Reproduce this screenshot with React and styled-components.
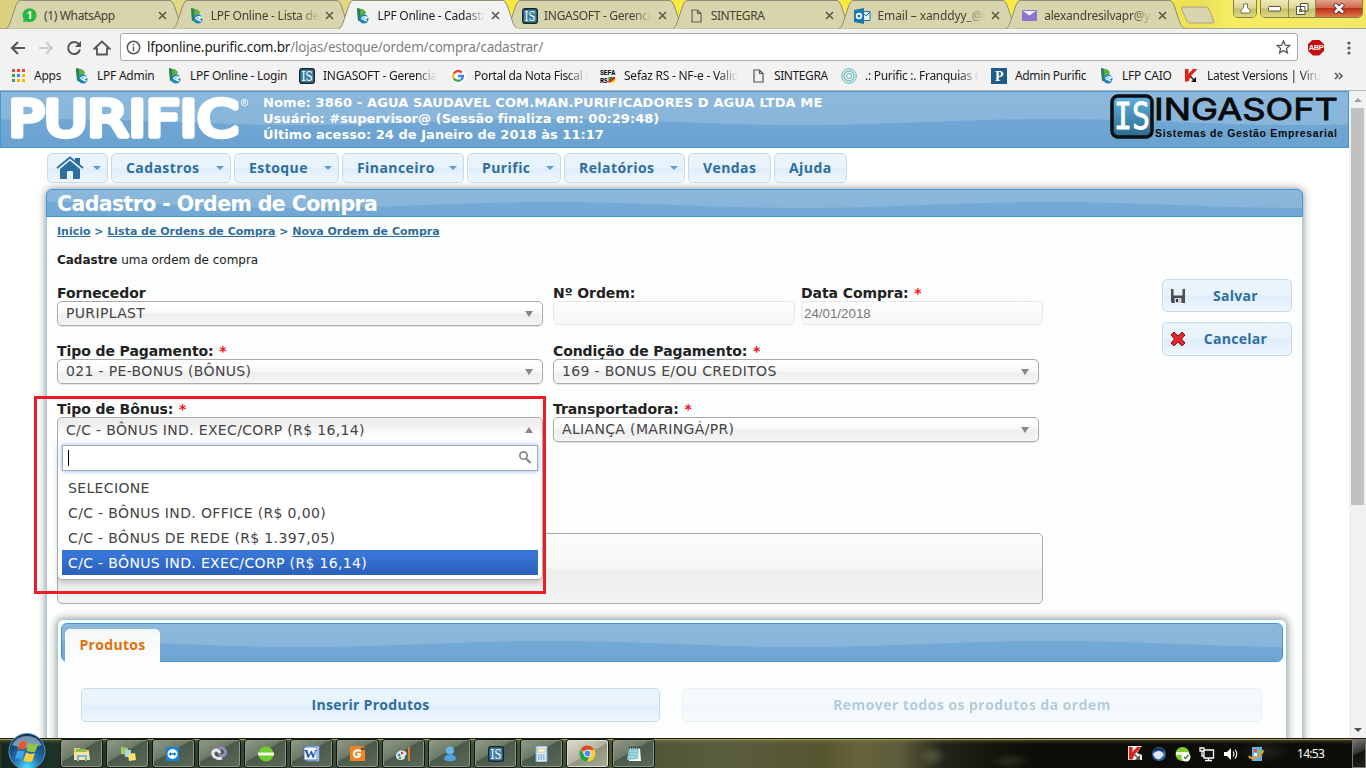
import React from "react";
import styled, { createGlobalStyle, css } from "styled-components";

const GlobalStyle = createGlobalStyle`
  *, *::before, *::after { box-sizing: border-box; }
  body { margin: 0; overflow: hidden; background: #fff; }
`;

const UI = `"Noto Sans", "Open Sans", sans-serif`;
const VERDANA = `"DejaVu Sans", sans-serif`;

const Screen = styled.div`
  width: 1366px;
  height: 768px;
  display: flex;
  flex-direction: column;
  overflow: hidden;
  font-family: ${VERDANA};
  color: #222;
`;

/* ---------- browser chrome ---------- */

const TabStrip = styled.div`
  position: relative;
  height: 29px;
  flex: none;
  display: flex;
  padding-left: 6px;
  border-bottom: 1px solid #a9a693;
  background: linear-gradient(90deg, #d9cf7e 0, #f0e678 8%, #cfc88a 20%, #f0e673 30%, #f7e93c 38%, #f8ea44 84%, #eadf58 88%, #f6ec62 90%, #f3e862 100%);
`;

const TabItem = styled.div`
  position: relative;
  width: 166.7px;
  height: 29px;
  flex: none;
  display: flex;
  align-items: center;
  padding: 2px 0 0 15px;
  z-index: ${(p) => (p.$active ? 2 : 1)};
  > svg:first-child { position: absolute; left: 0; top: 0; overflow: visible; }
`;

const TabIcon = styled.span`
  position: relative;
  width: 17px;
  height: 16px;
  display: flex;
  justify-content: center;
  align-items: center;
`;

const Fade = css`
  -webkit-mask-image: linear-gradient(90deg, #000 82%, transparent 100%);
  mask-image: linear-gradient(90deg, #000 82%, transparent 100%);
`;

const TabTitle = styled.span`
  position: relative;
  width: 108px;
  margin-left: 6px;
  overflow: hidden;
  white-space: nowrap;
  font: 12px/16px ${UI};
  letter-spacing: ${(p) => p.$ls || 0}px;
  color: ${(p) => (p.$active ? "#222" : "#45432f")};
  ${(p) => p.$fade && Fade}
`;

const CloseMark = styled.svg`
  position: relative;
  width: 9px;
  height: 9px;
  margin-left: 6px;
`;

const NewTab = styled.svg`
  position: relative;
  width: 36px;
  height: 20px;
  margin: 5px 0 0 7px;
`;

const WindowButtons = styled.div`
  position: absolute;
  top: -1px;
  right: 3px;
  display: flex;
  gap: 3px;
`;

const WinGroup = styled.div`
  display: flex;
  height: 19px;
  border: 1px solid #857f50;
  border-radius: 0 0 5px 5px;
  overflow: hidden;
  box-shadow: inset 0 0 0 1px #f5efae;
`;

const WinButton = styled.div`
  width: ${(p) => p.$w}px;
  display: flex;
  align-items: center;
  justify-content: center;
  border-left: ${(p) => (p.$sep ? "1px solid #8a855c" : "0")};
  background: ${(p) =>
    p.$close
      ? "linear-gradient(#e3a08a 0, #cf6a4e 45%, #bb2f16 50%, #dd7a4a 100%)"
      : "linear-gradient(#efe9b8 0, #dcd593 48%, #c4bc6b 52%, #e0d77d 100%)"};
`;

const Toolbar = styled.div`
  height: 37px;
  flex: none;
  display: flex;
  align-items: center;
  background: #f2f2f2;
  padding: 0 10px 0 4px;
`;

const NavIcon = styled.div`
  width: 28px;
  height: 28px;
  display: flex;
  align-items: center;
  justify-content: center;
`;

const Omnibox = styled.div`
  width: 1178px;
  height: 28px;
  margin: -1px 0 0 4px;
  padding: 0 6px 0 5px;
  display: flex;
  align-items: center;
  background: #fff;
  border: 1px solid #a9a9a9;
  border-radius: 3px;
`;

const Url = styled.span`
  flex: 1;
  margin-left: 6px;
  font: 13.5px/20px ${UI};
  letter-spacing: -0.21px;
  color: #808080;
  b { font-weight: 400; color: #222; }
`;

const Abp = styled.div`
  width: 16px;
  height: 16px;
  margin: 0 23px 0 10px;
  background: #c70d0d;
  clip-path: polygon(30% 0, 70% 0, 100% 30%, 100% 70%, 70% 100%, 30% 100%, 0 70%, 0 30%);
  color: #fff;
  font: bold 7.5px/16px "Liberation Sans", sans-serif;
  letter-spacing: -0.4px;
  text-align: center;
`;

const Bookmarks = styled.div`
  height: 25px;
  flex: none;
  display: flex;
  padding: 0 0 5px 10px;
  background: #f2f2f2;
  border-bottom: 1px solid #b6b4b6;
`;

const Bookmark = styled.div`
  width: ${(p) => p.$w}px;
  flex: none;
  display: flex;
  align-items: center;
  font: 12px/16px ${UI};
  letter-spacing: ${(p) => p.$ls || 0}px;
  color: #1c1c1c;
  white-space: nowrap;
`;

const BookmarkIcon = styled.span`
  width: 16px;
  height: 16px;
  flex: none;
  display: flex;
  align-items: center;
  justify-content: center;
  margin-right: 8px;
`;

const BookmarkText = styled.span`
  max-width: 114px;
  overflow: hidden;
  ${(p) => p.$fade && Fade}
`;

/* ---------- page ---------- */

const Viewport = styled.div`
  height: 647px;
  flex: none;
  display: flex;
  overflow: hidden;
`;

const Page = styled.div`
  width: 1349px;
  height: 647px;
  flex: none;
  overflow: hidden;
`;

const waveBar = css`
  position: relative;
  border: 1px solid #4297d7;
  background: linear-gradient(#8cb8dc, #86b3d9);
`;

const WaveSvg = styled.svg`
  position: absolute;
  inset: 0;
  width: 100%;
  height: 100%;
  border-radius: inherit;
`;

const Header = styled.header`
  ${waveBar}
  height: 57px;
  display: flex;
`;

const Brand = styled.svg`
  position: relative;
  width: 262px;
  height: 55px;
  flex: none;
`;

const SessionInfo = styled.div`
  position: relative;
  flex: 1;
  padding-top: 3px;
  font: bold 13px/16px ${VERDANA};
  color: #fff;
  white-space: nowrap;
`;

const Line = styled.div`
  letter-spacing: ${(p) => p.$ls || 0}px;
`;

const VendorLogo = styled.svg`
  position: relative;
  width: 232px;
  height: 50px;
  margin: 1px 6px 0 0;
`;

const Menu = styled.nav`
  display: flex;
  gap: 3px;
  padding: 5px 0 0 47px;
  height: 41px;
`;

const jqButton = css`
  border: 1px solid #c5dbec;
  border-radius: 5px;
  background: linear-gradient(#ebf4fd 0, #e8f3fc 48%, #deedfb 52%, #f0f7fe 100%);
  color: #2e6e9e;
  font-family: "Open Sans", ${UI};
  font-weight: 700;
`;

const MenuButton = styled.div`
  ${jqButton}
  width: ${(p) => p.$w}px;
  height: 30px;
  display: flex;
  align-items: center;
  padding: 0 6px 0 ${(p) => (p.$home ? 8 : 14)}px;
  font-size: 14px;
  letter-spacing: 0.42px;
  justify-content: space-between;
`;

const MenuText = styled.span`
  padding-bottom: 2px;
`;

const Caret = styled.i`
  border: 4px solid transparent;
  border-top-color: #5c9ccc;
  border-bottom: 0;
`;

const Panel = styled.main`
  width: 1257px;
  height: 600px;
  margin-left: 46px;
  border: 1px solid #a6c9e2;
  border-top: 0;
  border-radius: 6px 6px 0 0;
  background: #fcfdfd;
  box-shadow: 0 0 8px #888;
`;

const PanelTitle = styled.div`
  ${waveBar}
  height: 28px;
  margin: 0 -1px;
  border-radius: 6px 6px 0 0;
  padding-left: 10px;
`;

const Title = styled.h1`
  position: relative;
  margin: 0;
  font: bold 20.5px/28px ${VERDANA};
  letter-spacing: -0.6px;
  color: #fff;
`;

const Crumbs = styled.div`
  height: 21px;
  padding: 8px 0 0 10px;
  font: bold 11px/14px ${VERDANA};
  color: #2e6e9e;
  letter-spacing: -0.01px;
  white-space: nowrap;
  u { text-underline-offset: 1px; }
`;

const Intro = styled.div`
  padding: 14px 0 0 10px;
  font: 12px/16px ${VERDANA};
  letter-spacing: -0.02px;
  color: #222;
`;

const Body = styled.div`
  display: flex;
  justify-content: space-between;
  padding: 11px 10px 0;
  height: 351px;
`;

const Form = styled.div`
  position: relative;
  width: 986px;
  padding-top: 6px;
`;

const FieldRow = styled.div`
  display: grid;
  grid-template-columns: ${(p) => (p.$three ? "486px 242px 242px" : "486px 486px")};
  column-gap: ${(p) => (p.$three ? "0" : "10px")};
  ${(p) => p.$three && "> :nth-child(2) { margin: 0 0 0 10px; width: 242px; } > :nth-child(3) { margin-left: 16px; width: 242px; }"}
  height: 58px;
`;

const Label = styled.label`
  display: block;
  height: 16px;
  font: bold 14px/16px ${VERDANA};
  letter-spacing: -0.08px;
  color: #222;
  em { color: #e11; font-style: normal; margin-left: 1px; }
`;

const Select = styled.div`
  display: flex;
  align-items: center;
  justify-content: space-between;
  height: ${(p) => (p.$open ? 26 : 25)}px;
  padding: 0 9px 0 8px;
  border: 1px solid #aaa;
  border-radius: ${(p) => (p.$open ? "5px 5px 0 0" : "5px")};
  background: ${(p) =>
    p.$open
      ? "linear-gradient(#eee 20%, #fff 80%)"
      : "linear-gradient(#fff 20%, #f6f6f6 50%, #eee 52%, #f4f4f4 100%)"};
  box-shadow: ${(p) => (p.$open ? "none" : "0 1px 1px rgba(0,0,0,.1), inset 0 0 3px #fff")};
  font: 14px/${(p) => (p.$open ? 22 : 23)}px ${VERDANA};
  letter-spacing: 0.34px;
  color: #444;
`;

const Arrow = styled.i`
  border: 4px solid transparent;
  ${(p) =>
    p.$up
      ? "border-bottom: 6px solid #888; border-top: 0;"
      : "border-top: 6px solid #888; border-bottom: 0;"}
`;

const ReadOnly = styled.div`
  height: 24px;
  padding-left: 2px;
  border: 1px solid #e6e6e6;
  border-radius: 5px;
  background: linear-gradient(#fdfdfd, #f7f7f7);
  font: 13.33px/23px "Liberation Sans", sans-serif;
  color: #777;
`;

const Notes = styled.div`
  height: 71px;
  margin-top: 74px;
  border: 1px solid #aaa;
  border-radius: 5px;
  background: linear-gradient(#fcfcfc 0, #f7f7f7 49%, #eee 52%, #f2f2f2 100%);
`;

const Dropdown = styled.div`
  position: absolute;
  left: 0;
  top: 163px;
  width: 486px;
  height: 138px;
  padding: 3px 4px 0;
  border: 1px solid #aaa;
  border-top: 0;
  border-radius: 0 0 5px 5px;
  background: #fff;
  box-shadow: 0 4px 5px rgba(0, 0, 0, 0.15);
`;

const SearchBox = styled.div`
  height: 26px;
  margin-bottom: 4px;
  display: flex;
  align-items: center;
  justify-content: space-between;
  padding: 0 5px;
  border: 1px solid #aaa;
  box-shadow: 0 0 5px rgba(60, 130, 250, 0.6);
  &::before { content: ""; width: 1px; height: 16px; background: #000; }
`;

const Option = styled.div`
  height: 25px;
  padding-left: 6px;
  font: 14px/26px ${VERDANA};
  letter-spacing: 0.35px;
  color: ${(p) => (p.$on ? "#fff" : "#444")};
  background: ${(p) => (p.$on ? "linear-gradient(#3875d7 20%, #2a62bc 90%)" : "none")};
`;

const Highlight = styled.div`
  position: absolute;
  left: -23px;
  top: 117px;
  width: 512px;
  height: 198px;
  border: 3px solid #ed1c24;
`;

const Actions = styled.div`
  width: 130px;
  display: flex;
  flex-direction: column;
  gap: 10px;
`;

const ActionButton = styled.div`
  ${jqButton}
  height: 33px;
  display: flex;
  align-items: center;
  padding: 0 6px 0 7px;
  font-size: 14px;
  letter-spacing: 0.3px;
  span { flex: 1; text-align: center; padding-bottom: 1px; }
  &:last-child { height: 34px; }
`;

const Products = styled.section`
  width: 1230px;
  height: 200px;
  margin-left: 10px;
  padding: 3px;
  border: 1px solid #a6c9e2;
  border-radius: 6px;
  background: #fcfdfd;
  box-shadow: 0 0 8px #888;
`;

const TabsBar = styled.div`
  ${waveBar}
  height: 39px;
  border-radius: 6px;
  display: flex;
  align-items: flex-end;
  padding-left: 3px;
`;

const ProductTab = styled.div`
  position: relative;
  width: 95px;
  height: 33px;
  margin-bottom: -1px;
  border-radius: 5px 5px 0 0;
  background: linear-gradient(#f5f8f9, #fcfdfd);
  font: 700 14px/32px "Open Sans", ${UI};
  letter-spacing: 0.3px;
  color: #e17009;
  text-align: center;
`;

const ProductActions = styled.div`
  display: grid;
  grid-template-columns: 579px 580px;
  gap: 22px;
  padding: 26px 20px 0;
`;

const WideButton = styled.div`
  ${jqButton}
  height: 34px;
  font-size: 14px;
  line-height: 32px;
  letter-spacing: ${(p) => p.$ls}px;
  text-align: center;
  opacity: ${(p) => (p.$off ? 0.35 : 1)};
`;

const Scrollbar = styled.div`
  width: 17px;
  height: 647px;
  display: flex;
  flex-direction: column;
  align-items: center;
  justify-content: space-between;
  background: #f1f1f1;
  padding: 7px 0 6px;
`;

const Thumb = styled.div`
  width: 13px;
  height: 397px;
  margin: 6px 0 auto;
  background: #c1c1c1;
`;

const ScrollArrow = styled.i`
  border: 4px solid transparent;
  ${(p) => (p.$up ? "border-bottom-color:#a3a3a3;border-top:0;" : "border-top-color:#505050;border-bottom:0;")}
`;

/* ---------- taskbar ---------- */

const Taskbar = styled.footer`
  position: relative;
  height: 30px;
  flex: none;
  display: flex;
  align-items: flex-start;
  border-top: 1px solid #1d1c10;
  box-shadow: inset 0 1px 0 #a39a5c, inset 0 3px 3px rgba(150, 140, 80, 0.35);
  background:
    radial-gradient(14px 10px at 932px 17px, rgba(110,115,80,.55), transparent),
    radial-gradient(20px 8px at 1010px 22px, rgba(70,70,45,.5), transparent),
    radial-gradient(26px 12px at 1265px 12px, rgba(60,70,55,.4), transparent),
    linear-gradient(90deg, #14271f 0, #1d3127 4%, #35493a 18%, #3f5137 35%, #4c5234 45%, #5a5d3f 53%, #55552f 60%, #66643c 63%, #5b5b3a 66%, #25251a 69%, #14140c 73%, #0b0b07 77%, #0d0d08 100%);
`;

const Start = styled.svg`
  width: 60px;
  height: 35px;
  margin-top: -6px;
  flex: none;
`;

const TaskButtons = styled.div`
  display: flex;
  gap: 3px;
`;

const TaskButton = styled.div`
  width: 43px;
  height: 29px;
  display: flex;
  align-items: center;
  justify-content: center;
  border: 1px solid #10150f;
  border-radius: 3px;
  box-shadow: inset 0 0 0 1px ${(p) => (p.$on ? "#dfe0d2" : "#8b9583")};
  background: ${(p) =>
    p.$on
      ? "linear-gradient(150deg, #dcdccd 0, #b3b5a1 50%, #8f947d 53%, #a8ac98 100%)"
      : "linear-gradient(150deg, #939b88 0, #6e7a68 42%, #4a594b 46%, #5d6a59 100%)"};
`;

const Tray = styled.div`
  margin-left: auto;
  width: 238px;
  height: 29px;
  display: flex;
  align-items: center;
  gap: 8px;
`;

const Clock = styled.span`
  margin: 0 0 0 24px;
  width: 46px;
  font: 12px/16px ${UI};
  letter-spacing: -0.7px;
  color: #fff;
`;

const ShowDesktop = styled.div`
  width: 14px;
  height: 29px;
  margin: 0 0 0 auto;
  border: 1px solid #77776f;
  background: linear-gradient(155deg, #777 0, #33332d 45%, #10100c 50%, #22221d 100%);
`;

/* ---------- drawings ---------- */

/* Two-tone wave with a 500px period; `low` is the x of one trough. */
function Wave({ low, mid, amp = 3 }) {
  const points = [];
  for (let x = -10; x <= 1360; x += 10) {
    const y = mid + amp * Math.cos(((x - low) / 500) * 2 * Math.PI);
    points.push(`${x},${y.toFixed(2)}`);
  }
  return (
    <WaveSvg>
      <defs>
        <linearGradient id={`w${mid}`} x1="0" y1="0" x2="0" y2="60" gradientUnits="userSpaceOnUse">
          <stop offset="0" stopColor="#76acd7" />
          <stop offset="1" stopColor="#69a1d0" />
        </linearGradient>
      </defs>
      <path d={`M${points.join("L")}V80H-10Z`} fill={`url(#w${mid})`} />
    </WaveSvg>
  );
}

const LeafIcon = () => (
  <svg width="15" height="16" viewBox="0 0 15 16">
    <path d="M2 0 8.500 1.500 11 4 10 7 6 9 6 14 3 12.500Z" fill="#5bb04a" />
    <path d="M2 0 5 1 5.500 13.500 3 12.500Z" fill="#2a7f5a" />
    <circle cx="9" cy="11" r="4.500" fill="#2185bd" />
    <path d="M6.500 11Q8 7.500 12.500 9.500L8.500 11.500 12 13" fill="none" stroke="#e4f6ff" strokeWidth="1.500" />
  </svg>
);

const IsIcon = ({ s = 16 }) => (
  <svg width={s} height={s} viewBox="0 0 16 16">
    <rect x=".7" y=".7" width="14.600" height="14.600" rx="2.200" fill="#3d7f9e" stroke="#17242c" strokeWidth="1.400" />
    <text x="2.500" y="13" textLength="11" lengthAdjust="spacingAndGlyphs" fontSize="13" fontFamily="DejaVu Serif" fill="#fff">IS</text>
  </svg>
);

const DocIcon = ({ c = "#555" }) => (
  <svg width="11" height="14" viewBox="0 0 11 14" fill="none" stroke={c} strokeWidth="1.200">
    <path d="M1 1H6.500L10 4.500V13H1Z M6.500 1V4.500H10" />
  </svg>
);

const WhatsIcon = () => (
  <svg width="15" height="15" viewBox="0 0 15 15">
    <circle cx="7.500" cy="7.300" r="7" fill="#2cb742" />
    <path d="M1 14.500 2 10 5 13Z" fill="#2cb742" />
    <text x="7.500" y="11" textAnchor="middle" fontSize="10" fontWeight="700" fontFamily="Open Sans" fill="#fff">1</text>
  </svg>
);

const OutlookIcon = () => (
  <svg width="17" height="16" viewBox="0 0 17 16">
    <path d="M8 3.500H16V12.500H8Z" fill="#e8f3fa" stroke="#1877ae" />
    <path d="M8 4 12 8 16 4" fill="none" stroke="#1877ae" />
    <path d="M0 2 10 0V16L0 14Z" fill="#1877ae" />
    <circle cx="5" cy="8" r="2.400" fill="none" stroke="#fff" strokeWidth="1.600" />
  </svg>
);

const MailIcon = () => (
  <svg width="15" height="11" viewBox="0 0 15 11">
    <rect width="15" height="11" rx="1" fill="#8a76cc" />
    <path d="M1 1H14L7.500 5.500Z" fill="#f1eefc" />
  </svg>
);

const AppsIcon = () => (
  <svg width="13" height="13" viewBox="0 0 13 13">
    {["#e8453c", "#e8453c", "#e8453c", "#34a058", "#4286f5", "#f4b400", "#34a058", "#f4b400", "#f4b400"].map((c, i) => (
      <rect key={i} x={(i % 3) * 5} y={Math.floor(i / 3) * 5} width="3" height="3" fill={c} />
    ))}
  </svg>
);

const GoogleIcon = () => (
  <svg width="16" height="16" viewBox="0 0 16 16" fill="none" strokeWidth="2.300">
    <circle cx="8" cy="8" r="8" fill="#fff" />
    <path d="M11.800 4.600A5 5 0 0 0 3.700 5.700" stroke="#ea4335" />
    <path d="M3.700 5.600A5 5 0 0 0 3.700 10.400" stroke="#fbbc05" />
    <path d="M3.700 10.300A5 5 0 0 0 11.200 11.700" stroke="#34a853" />
    <path d="M8 8H13A5 5 0 0 1 11.200 11.700" stroke="#4285f4" />
  </svg>
);

const SefazIcon = () => (
  <svg width="17" height="16" viewBox="0 0 17 16">
    <text x="0" y="7" fontSize="7" fontWeight="700" textLength="16" fontFamily="Liberation Mono" fill="#000">SEFA</text>
    <text x="0" y="15" fontSize="7" fontWeight="700" textLength="8" fontFamily="Liberation Mono" fill="#000">RS</text>
    <path d="M9 9H16L9 15Z" fill="#159a3c" />
    <path d="M16 9V15H9Z" fill="#f3d51d" />
    <path d="M9 15 9 13 14 9H16V11L11 15Z" fill="#e0251b" />
  </svg>
);

const RingIcon = () => (
  <svg width="16" height="16" viewBox="0 0 16 16" fill="none" stroke="#5fb3b8">
    <circle cx="8" cy="8" r="7.300" />
    <circle cx="8" cy="8" r="5" strokeWidth="1.500" stroke="#7cc4c4" />
    <circle cx="8" cy="8" r="2.500" />
  </svg>
);

const PIcon = () => (
  <svg width="16" height="16" viewBox="0 0 16 16">
    <rect width="16" height="16" fill="#1d5c8b" />
    <text x="8" y="13" textAnchor="middle" fontSize="14" fontWeight="700" fontFamily="Liberation Serif" fill="#fff">P</text>
  </svg>
);

const KIcon = ({ tray }) => (
  <svg width="15" height="15" viewBox="0 0 15 15">
    {tray && <path d="M0 0H14L9 7 14 9V14H0Z" fill="#eee" />}
    <path d="M1 1H4.500V6L9 1H13.500L6.500 8.500 4.500 13.500H1Z" fill="#e2231a" />
    <path d="M6.500 7.500 10 11 12 9V14H7L9 12 6 9Z" fill={tray ? "#555" : "#111"} />
  </svg>
);

const WordIcon = () => (
  <svg width="17" height="17" viewBox="0 0 17 17">
    <path d="M3 1H16V16H3Z" fill="#f3f7fc" stroke="#5c88c4" />
    <path d="M1 2H14V15H1Z" fill="#f3f7fc" stroke="#2b60b0" strokeWidth=".8" />
    <text x="7.500" y="13" textAnchor="middle" fontSize="13" fontWeight="700" fontFamily="Liberation Serif" fill="#1f55a8">W</text>
  </svg>
);

const ChromeIcon = () => (
  <svg width="17" height="17" viewBox="0 0 16 16">
    <circle cx="8" cy="8" r="7.500" fill="#f9cd2f" />
    <path d="M8 8 1.500 4.200A7.500 7.500 0 0 1 14.500 4.500H8Z" fill="#dc4434" />
    <path d="M1.500 4.200A7.500 7.500 0 0 0 7.300 15.500L10 10 5 9.500Z" fill="#1c9f57" />
    <circle cx="8" cy="8" r="3.600" fill="#fff" />
    <circle cx="8" cy="8" r="2.800" fill="#4a8af4" />
  </svg>
);

const taskIcons = [
  <svg width="18" height="16" viewBox="0 0 18 16"><path d="M1 2H7L8 4H16V14H1Z" fill="#e9c964" /><path d="M3 3H13V6H3Z" fill="#8cc152" /><path d="M1 6H16L17 14H1Z" fill="#f7e6a0" /><path d="M5 15V10H13V15" fill="none" stroke="#72b5e0" strokeWidth="2" /></svg>,
  <svg width="18" height="16" viewBox="0 0 18 16"><path d="M2 1 9 2 9 9 2 8Z" fill="#9ccf6c" /><path d="M6 4 12 4 12 11 6 11Z" fill="#a9d4ee" /><path d="M9 8 16 7 17 14 10 15Z" fill="#f8e071" /></svg>,
  <svg width="15" height="16" viewBox="0 0 15 16"><path d="M0 1H13V15H0Z" fill="#1585d8" /><circle cx="6.500" cy="8" r="5" fill="#fff" /><path d="M2.500 8 5 6V7.300H8V6L10.500 8 8 10V8.700H5V10Z" fill="#1778c0" /></svg>,
  <svg width="17" height="15" viewBox="0 0 17 15" fill="none" strokeWidth="3"><path d="M8 8C11 12 16 9 14 4 12 1 9 2 8 3" stroke="#8f89c0" /><path d="M9 7C6 2 1 4 2 9 4 13 9 13 11 12" stroke="#e6e3f2" /></svg>,
  <svg width="16" height="16" viewBox="0 0 16 16"><circle cx="8" cy="8" r="7.500" fill="#6fce27" /><path d="M0 6.500H16V9.500H0Z" fill="#f4fbe9" /></svg>,
  <WordIcon />,
  <svg width="17" height="17" viewBox="0 0 17 17"><path d="M1 1H12V5H16V16H1Z" fill="#f58220" /><path d="M13 0 16 3H13Z" fill="#f58220" /><path d="M12 6C7 4 4 7 5 10S11 13 11 9H8" fill="none" stroke="#fff" strokeWidth="2" /></svg>,
  <svg width="17" height="16" viewBox="0 0 17 16"><path d="M1 10C1 5 7 3 11 6 13 9 9 9 10 12 8 15 1 15 1 10Z" fill="#dce9f2" /><circle cx="4" cy="9" r="1.300" fill="#3b78c8" /><circle cx="7" cy="7" r="1.300" fill="#d84a38" /><circle cx="5" cy="12" r="1.300" fill="#47a447" /><path d="M14 1V9M14 9V15" stroke="#d97b27" strokeWidth="2" /></svg>,
  <svg width="14" height="16" viewBox="0 0 14 16"><circle cx="7" cy="4.500" r="4" fill="#68b7ec" /><path d="M1 13C1 7 13 7 13 13 12 16 2 16 1 13Z" fill="#4fa3e4" /></svg>,
  <IsIcon />,
  <svg width="13" height="16" viewBox="0 0 13 16"><rect x="1" width="11" height="16" fill="#d9ebf8" stroke="#6ba7d6" /><path d="M3 3H10V6H3Z" fill="#fff" stroke="#e8a64a" strokeWidth=".7" /><path d="M3 9H10M3 11H10M3 13H10" stroke="#4a88be" strokeDasharray="1.500 1" /></svg>,
  <ChromeIcon />,
  <svg width="16" height="16" viewBox="0 0 16 16"><path d="M3 2H14L15 15H3Z" fill="#fff" /><path d="M3 2H13L12 13 1 14Z" fill="#85c5d2" /><path d="M3 1.500H14" stroke="#333" strokeWidth="2" strokeDasharray="1 1" /><path d="M4 5H12M4 8H12M3 11H11" stroke="#b5dfe6" /></svg>,
];

const tabs = [
  { t: "(1) WhatsApp", icon: <WhatsIcon />, ls: -0.35 },
  { t: "LPF Online - Lista de", icon: <LeafIcon />, fade: 1, ls: -0.25 },
  { t: "LPF Online - Cadastrar", icon: <LeafIcon />, fade: 1, active: 1, ls: -0.25 },
  { t: "INGASOFT - Gerenciad", icon: <IsIcon />, fade: 1, ls: -0.3 },
  { t: "SINTEGRA", icon: <DocIcon c="#66644d" />, ls: -0.4 },
  { t: "Email – xanddyy_@hot", icon: <OutlookIcon />, fade: 1, ls: -0.1 },
  { t: "alexandresilvapr@yah", icon: <MailIcon />, fade: 1, ls: -0.2 },
];

const bookmarks = [
  { t: "Apps", icon: <AppsIcon />, w: 63 },
  { t: "LPF Admin", icon: <LeafIcon />, w: 93 },
  { t: "LPF Online - Login", icon: <LeafIcon />, w: 133 },
  { t: "INGASOFT - Gerenciad", icon: <IsIcon />, w: 151, fade: 1 },
  { t: "Portal da Nota Fiscal El", icon: <GoogleIcon />, w: 150, fade: 1, ls: -0.32 },
  { t: "Sefaz RS - NF-e - Valid", icon: <SefazIcon />, w: 150, fade: 1 },
  { t: "SINTEGRA", icon: <DocIcon />, w: 91, ls: -0.4 },
  { t: ".: Purific :. Franquias de", icon: <RingIcon />, w: 150, fade: 1, ls: -0.28 },
  { t: "Admin Purific", icon: <PIcon />, w: 107, ls: -0.35 },
  { t: "LFP CAIO", icon: <LeafIcon />, w: 85 },
  { t: "Latest Versions | Virus", icon: <KIcon />, w: 151, fade: 1, ls: -0.3 },
];

const menu = [
  ["Cadastros", 120, 1],
  ["Estoque", 105, 1],
  ["Financeiro", 122, 1],
  ["Purific", 94, 1],
  ["Relatórios", 121, 1],
  ["Vendas", 83, 0],
  ["Ajuda", 73, 0],
];

function Field({ label, required, children }) {
  return (
    <div>
      <Label>{label}{required && <em> *</em>}</Label>
      {children}
    </div>
  );
}

function BrowserChrome() {
  return (
    <>
      <TabStrip>
        {tabs.map((t) => (
          <TabItem key={t.t} $active={t.active}>
            <svg width="180" height="29">
              <path
                d="M0 28.500C3 27 3 25 4 23L10 5Q12 .5 14 .5H164Q166 .5 168 5L174 23C175 25 176 28 179 28.500"
                fill={t.active ? "#f2f2f2" : "#d8d4ae"}
                stroke="#8f8c78"
              />
              {t.active && <path d="M1 29H179" stroke="#f2f2f2" strokeWidth="2" />}
            </svg>
            <TabIcon>{t.icon}</TabIcon>
            <TabTitle $active={t.active} $fade={t.fade} $ls={t.ls}>{t.t}</TabTitle>
            <CloseMark viewBox="0 0 9 9"><path d="M1 1 8 8M8 1 1 8" stroke="#5b5949" strokeWidth="1.600" /></CloseMark>
          </TabItem>
        ))}
        <NewTab viewBox="0 0 36 20">
          <path d="M2 2H25Q28 2 29 4L34 17Q34 18 32 18H10Q8 18 7 16L1.500 4Q1 2 2 2Z" fill="#d8d4ae" stroke="#aaa47c" />
        </NewTab>
        <WindowButtons>
          <WinGroup><WinButton $w={22}>
            <svg width="11" height="11"><path d="M3.500 1H7.500V5L10 7V10H1V7L3.500 5Z" fill="#fff" stroke="#77745a" /></svg>
          </WinButton></WinGroup>
          <WinGroup>
            <WinButton $w={27}><svg width="13" height="6"><rect x=".5" y=".5" width="12" height="4.500" rx="1" fill="#fff" stroke="#55533d" /></svg></WinButton>
            <WinButton $w={27} $sep>
              <svg width="13" height="12" fill="#fff" stroke="#55533d"><path d="M4.500 .5H12V8H4.500Z M.5 3.500H9V11.500H.5Z" /><path d="M3.500 6.500H6V8.500H3.500Z" fill="#c9c17a" /></svg>
            </WinButton>
            <WinButton $w={47} $sep $close>
              <svg width="14" height="11"><path d="M2.500 1 11.500 10M11.500 1 2.500 10" stroke="#4f3330" strokeWidth="4.500" /><path d="M3 1.500 11 9.500M11 1.500 3 9.500" stroke="#fff" strokeWidth="2.600" /></svg>
            </WinButton>
          </WinGroup>
        </WindowButtons>
      </TabStrip>
      <Toolbar>
        <NavIcon><svg width="16" height="14" fill="none" stroke="#555" strokeWidth="2"><path d="M15 7H2M8 1 2 7 8 13" /></svg></NavIcon>
        <NavIcon><svg width="16" height="14" fill="none" stroke="#ccc" strokeWidth="2"><path d="M1 7H14M8 1 14 7 8 13" /></svg></NavIcon>
        <NavIcon><svg width="16" height="16"><path d="M13 4.500A6 6 0 1 0 14 9.500" fill="none" stroke="#555" strokeWidth="2" /><path d="M15 1V7H9Z" fill="#555" /></svg></NavIcon>
        <NavIcon><svg width="18" height="16" fill="none" stroke="#555" strokeWidth="1.800"><path d="M1.500 8.500 9 1.500 16.500 8.500H14V14.500H4V8.500Z" /></svg></NavIcon>
        <Omnibox>
          <svg width="15" height="15" fill="none" stroke="#555" strokeWidth="1.500"><circle cx="7.500" cy="7.500" r="6.200" /><path d="M7.500 6.500V11M7.500 3.800V5.300" /></svg>
          <Url><b>lfponline.purific.com.br</b>/lojas/estoque/ordem/compra/cadastrar/</Url>
          <svg width="15" height="14" viewBox="0 0 15 14" fill="none" stroke="#555" strokeWidth="1.300"><path d="M7.500 1 9.300 5.200 13.800 5.500 10.400 8.400 11.500 13 7.500 10.500 3.500 13 4.600 8.400 1.200 5.500 5.700 5.200Z" /></svg>
        </Omnibox>
        <Abp>ABP</Abp>
        <svg width="4" height="14" fill="#555"><circle cx="2" cy="2" r="1.600" /><circle cx="2" cy="7" r="1.600" /><circle cx="2" cy="12" r="1.600" /></svg>
      </Toolbar>
      <Bookmarks>
        {bookmarks.map((b) => (
          <Bookmark key={b.t} $w={b.w} $ls={b.ls ?? -0.24}>
            <BookmarkIcon>{b.icon}</BookmarkIcon>
            <BookmarkText $fade={b.fade}>{b.t}</BookmarkText>
          </Bookmark>
        ))}
        <svg width="10" height="20" fill="none" stroke="#555" strokeWidth="1.500"><path d="M1 7 4 10 1 13M5 7 8 10 5 13" /></svg>
      </Bookmarks>
    </>
  );
}

function PageHeader() {
  return (
    <Header>
      <Wave low={300} mid={30} />
      <Brand viewBox="0 0 262 55">
        <text x="7.500" y="43.800" textLength="230" lengthAdjust="spacingAndGlyphs" fontSize="50" fontFamily="DejaVu Sans" fill="#fff" stroke="#fff" strokeWidth="5.400" strokeLinejoin="round" strokeLinecap="round">PURIFIC</text>
        <circle cx="243.500" cy="10.500" r="3.300" fill="none" stroke="#fff" strokeWidth=".8" />
        <path d="M242.300 12.500V8.700H244.200Q245.400 9.800 244 10.600H242.300M243.700 10.600 245 12.500" fill="none" stroke="#fff" strokeWidth=".8" />
      </Brand>
      <SessionInfo>
        <Line $ls={0.11}>Nome: 3860 - AGUA SAUDAVEL COM.MAN.PURIFICADORES D AGUA LTDA ME</Line>
        <Line $ls={0.04}>Usuário: #supervisor@ (Sessão finaliza em: 00:29:48)</Line>
        <Line $ls={0.04}>Último acesso: 24 de Janeiro de 2018 às 11:17</Line>
      </SessionInfo>
      <VendorLogo viewBox="0 0 232 50">
        <defs><linearGradient id="is" x2="0" y2="1"><stop stopColor="#5fb2df" /><stop offset="1" stopColor="#2b6a8c" /></linearGradient></defs>
        <rect x="2" y="3" width="40" height="41" rx="6" fill="url(#is)" stroke="#0a0f13" strokeWidth="3.500" />
        <text x="4" y="36" textLength="36" lengthAdjust="spacingAndGlyphs" fontSize="37" fontFamily="DejaVu Sans Mono" fill="#fff" stroke="#fff" strokeWidth=".8">IS</text>
        <text x="44" y="27" textLength="184" lengthAdjust="spacingAndGlyphs" fontSize="29.500" fontFamily="Inter" fill="#0a0a0a" stroke="#0a0a0a" strokeWidth=".8">INGASOFT</text>
        <text x="45" y="44" textLength="182" fontSize="10.500" fontWeight="700" fontFamily="Liberation Sans" fill="#0a0a0a">Sistemas de Gestão Empresarial</text>
      </VendorLogo>
    </Header>
  );
}

function OrderForm() {
  return (
    <Form>
      <FieldRow $three>
        <Field label="Fornecedor"><Select>PURIPLAST<Arrow /></Select></Field>
        <Field label="Nº Ordem:"><ReadOnly /></Field>
        <Field label="Data Compra:" required><ReadOnly>24/01/2018</ReadOnly></Field>
      </FieldRow>
      <FieldRow>
        <Field label="Tipo de Pagamento:" required><Select>021 - PE-BONUS (BÔNUS)<Arrow /></Select></Field>
        <Field label="Condição de Pagamento:" required><Select>169 - BONUS E/OU CREDITOS<Arrow /></Select></Field>
      </FieldRow>
      <FieldRow>
        <Field label="Tipo de Bônus:" required><Select $open>C/C - BÔNUS IND. EXEC/CORP (R$ 16,14)<Arrow $up /></Select></Field>
        <Field label="Transportadora:" required><Select>ALIANÇA (MARINGÁ/PR)<Arrow /></Select></Field>
      </FieldRow>
      <Notes />
      <Dropdown>
        <SearchBox>
          <svg width="14" height="14" fill="none" stroke="#888"><circle cx="5.500" cy="4.500" r="3.700" strokeWidth="1.700" /><path d="M8 7.500 12.500 12" strokeWidth="2.300" /></svg>
        </SearchBox>
        <Option>SELECIONE</Option>
        <Option>C/C - BÔNUS IND. OFFICE (R$ 0,00)</Option>
        <Option>C/C - BÔNUS DE REDE (R$ 1.397,05)</Option>
        <Option $on>C/C - BÔNUS IND. EXEC/CORP (R$ 16,14)</Option>
      </Dropdown>
      <Highlight />
    </Form>
  );
}

export default function App() {
  return (
    <Screen>
      <GlobalStyle />
      <BrowserChrome />
      <Viewport>
        <Page>
          <PageHeader />
          <Menu>
            <MenuButton $w={61} $home>
              <svg width="28" height="24" viewBox="0 0 28 24" fill="#2e6e9e">
                <path d="M19 2H24V9L19 5Z M14 4.500 24 13V22Q24 23 23 23H17V16Q17 15 16 15H12Q11 15 11 16V23H5Q4 23 4 22V13Z" />
                <path d="M1 12 14 1.500 27 12" fill="none" stroke="#2e6e9e" strokeWidth="1.800" />
              </svg>
              <Caret />
            </MenuButton>
            {menu.map(([t, w, c]) => (
              <MenuButton key={t} $w={w}><MenuText>{t}</MenuText>{!!c && <Caret />}</MenuButton>
            ))}
          </Menu>
          <Panel>
            <PanelTitle>
              <Wave low={254} mid={15} />
              <Title>Cadastro - Ordem de Compra</Title>
            </PanelTitle>
            <Crumbs><u>Inicio</u> &gt; <u>Lista de Ordens de Compra</u> &gt; <u>Nova Ordem de Compra</u></Crumbs>
            <Intro><b>Cadastre</b> uma ordem de compra</Intro>
            <Body>
              <OrderForm />
              <Actions>
                <ActionButton>
                  <svg width="16" height="16" viewBox="0 0 16 16"><path d="M1 1H15V15H2L1 14Z" fill="#4b4b50" /><path d="M3.500 1H12.500V7.500H3.500Z" fill="#e6f1fa" /><path d="M4.500 10H11.500V15H4.500Z" fill="#cfd2d6" /><path d="M6 11H8V14H6Z" fill="#333" /></svg>
                  <span>Salvar</span>
                </ActionButton>
                <ActionButton>
                  <svg width="16" height="16" viewBox="0 0 16 16"><path d="M4 1 8 5 12 1 15 4 11.500 8 15 12 12 15 8 11 4 15 1 12 4.500 8 1 4Z" fill="#e0282b" stroke="#7d1414" strokeWidth="1" /></svg>
                  <span>Cancelar</span>
                </ActionButton>
              </Actions>
            </Body>
            <Products>
              <TabsBar>
                <Wave low={239} mid={20} />
                <ProductTab>Produtos</ProductTab>
              </TabsBar>
              <ProductActions>
                <WideButton $ls={0.3}>Inserir Produtos</WideButton>
                <WideButton $ls={0.45} $off>Remover todos os produtos da ordem</WideButton>
              </ProductActions>
            </Products>
          </Panel>
        </Page>
        <Scrollbar><ScrollArrow $up /><Thumb /><ScrollArrow /></Scrollbar>
      </Viewport>
      <Taskbar>
        <Start viewBox="0 0 60 35">
          <defs><radialGradient id="orb" cx=".5" cy=".95" r=".9"><stop stopColor="#4fe0ff" /><stop offset=".4" stopColor="#2477b4" /><stop offset="1" stopColor="#0f3157" /></radialGradient></defs>
          <circle cx="27" cy="18.500" r="18" fill="url(#orb)" stroke="#5b96bb" />
          <path d="M12 12A17 17 0 0 1 42 12Q27 18 12 12Z" fill="#dcebf5" opacity=".5" />
          <path d="M20 9Q24 7 27 9.500L25 17Q21 15 17.500 17Z" fill="#e8562c" />
          <path d="M28.500 10Q33 12.500 38 10.500L35.500 18.500Q31 20 26.500 17.500Z" fill="#8fc73e" />
          <path d="M17 18.500Q21 16.500 24.500 18.500L22 26.500Q19 24.500 15 26Z" fill="#3fa3e8" />
          <path d="M26 19.500Q30.500 22 35 20L32.500 28Q28 30 23.500 27.500Z" fill="#fbcc3a" />
        </Start>
        <TaskButtons>
          {taskIcons.map((icon, i) => <TaskButton key={i} $on={i === 11}>{icon}</TaskButton>)}
        </TaskButtons>
        <Tray>
          <KIcon tray />
          <svg width="16" height="16"><circle cx="8" cy="8" r="7" fill="#2f66a8" /><path d="M2 8Q6 3 11 6L13 9 9 13Q4 14 2 8Z" fill="#dfe8f2" /><path d="M3 5Q7 1 13 5" stroke="#142f5a" strokeWidth="2" fill="none" /></svg>
          <svg width="16" height="16"><circle cx="7.500" cy="8" r="7" fill="#7fce2e" /><path d="M1 6H14V9H1Z" fill="#e9f7d8" /><circle cx="11" cy="11" r="4.500" fill="#fff" /><path d="M9 11 10.500 12.500 13.500 9" stroke="#3d7a1e" fill="none" strokeWidth="1.300" /></svg>
          <svg width="16" height="16" fill="none" stroke="#fff" strokeWidth="1.300"><path d="M5 4H14.500V12H5Z M9.500 12V14.500M6 14.500H13M1 2H5V5H1Z M3 5V10H5" fill="#111" /></svg>
          <svg width="17" height="16"><path d="M1 6H4L8 2V14L4 10H1Z" fill="#fff" /><path d="M10 5.500Q12 8 10 10.500M12 3.500Q15.500 8 12 12.500" stroke="#eee" fill="none" strokeWidth="1.200" /></svg>
          <svg width="17" height="16"><path d="M4 1H14V15H4Z" fill="#62b3ea" /><path d="M6 3H9V6H6Z" fill="#e9542e" /><path d="M10 4H13V7H10Z" fill="#87c540" /><path d="M6 7H9V10H6Z" fill="#fff" /><path d="M1 10Q3 14 9 11T15 4" stroke="#f09a2b" strokeWidth="2" fill="none" /></svg>
          <Clock>14:53</Clock>
          <ShowDesktop />
        </Tray>
      </Taskbar>
    </Screen>
  );
}
